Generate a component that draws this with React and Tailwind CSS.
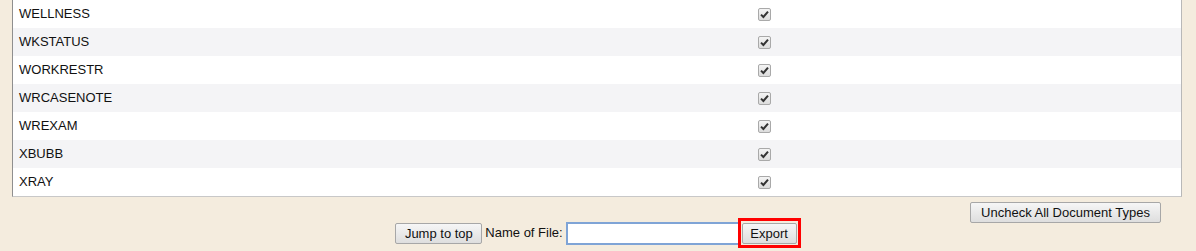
import React from "react";

const rows = ["WELLNESS", "WKSTATUS", "WORKRESTR", "WRCASENOTE", "WREXAM", "XBUBB", "XRAY"];

function Check() {
  return (
    <span className="flex h-[13px] w-[13px] items-center justify-center rounded-[2px] border border-[#a9a9a9] bg-gradient-to-b from-[#f4f4f4] to-[#dcdcdc]">
      <svg width="9" height="9" viewBox="0 0 9 9">
        <path d="M1 4.6 L3.4 7 L8 1.6" stroke="#333" strokeWidth="2" fill="none" strokeLinejoin="miter" />
      </svg>
    </span>
  );
}

function Btn({ children, className = "" }) {
  return (
    <button
      className={
        "h-[21px] rounded-[2px] border border-[#a7a7a7] bg-gradient-to-b from-[#f6f6f6] to-[#dedede] px-[7px] text-[13px] leading-none text-[#111] " +
        className
      }
      style={{ fontFamily: '"Liberation Sans", Arial, sans-serif' }}
    >
      {children}
    </button>
  );
}

export default function App() {
  return (
    <div
      className="h-[251px] w-[1196px] overflow-hidden bg-[#f4ecde] text-[13px] text-[#111]"
      style={{ fontFamily: '"Liberation Sans", Arial, sans-serif' }}
    >
      <div className="ml-[12px] w-[1170px] border-b border-l border-r border-b-[#c8c8c8] border-l-[#8f8f8f] border-r-[#b8b8b8] bg-white">
        {rows.map((r, i) => (
          <div key={r} className={"flex h-[28px] items-center " + (i % 2 === 1 ? "bg-[#f4f4f6]" : "bg-white")}>
            <div className="w-[745px] pl-[6px]">{r}</div>
            <Check />
          </div>
        ))}
      </div>
      <div className="mt-[5px] flex justify-end pr-[35px]">
        <Btn className="w-[191px] px-0">Uncheck All Document Types</Btn>
      </div>
      <div className="-mt-[5px] flex h-[30px] items-center justify-center">
        <Btn className="w-[87px] px-0">Jump to top</Btn>
        <span className="ml-[3px] mr-[3px]">Name of File:</span>
        <input className="h-[23px] w-[174px] border-2 border-[#7fa4d6] bg-white px-1 outline-none" />
        <span className="-ml-[2px] flex h-[30px] items-center border-[3px] border-[#ff0000] px-[1px]">
          <Btn className="w-[55px] px-0">Export</Btn>
        </span>
      </div>
    </div>
  );
}
